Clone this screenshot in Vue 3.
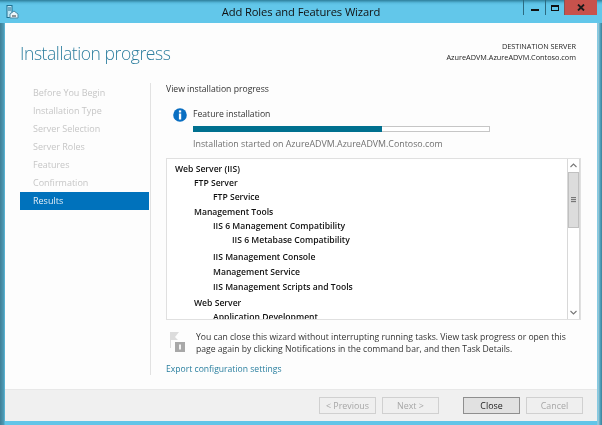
<script setup>
const steps = ['Before You Begin', 'Installation Type', 'Server Selection', 'Server Roles', 'Features', 'Confirmation', 'Results']
const tree = [
  { t: 'Web Server (IIS)', l: 0, h: 14 },
  { t: 'FTP Server', l: 1, h: 13.5 },
  { t: 'FTP Service', l: 2, h: 15 },
  { t: 'Management Tools', l: 1, h: 14.5 },
  { t: 'IIS 6 Management Compatibility', l: 2, h: 13.5 },
  { t: 'IIS 6 Metabase Compatibility', l: 3, h: 17 },
  { t: 'IIS Management Console', l: 2, h: 15 },
  { t: 'Management Service', l: 2, h: 15 },
  { t: 'IIS Management Scripts and Tools', l: 2, h: 16 },
  { t: 'Web Server', l: 1, h: 14 },
  { t: 'Application Development', l: 2, h: 14 },
]
const indent = [8, 27, 46, 65]
</script>

<template>
  <div class="frame">
    <header class="titlebar">
      <svg class="appicon" width="13" height="14" viewBox="0 0 13 14">
        <rect x="1" y="0.5" width="5" height="12" fill="#bfe6f5" stroke="#1f6f8f" stroke-width="1" />
        <path d="M2 3h3M2 5h3" stroke="#1f6f8f" stroke-width="1" />
        <path d="M4 9l4-3 4 3v4H4z" fill="#eef7fb" stroke="#4d8ba5" stroke-width="1" />
        <path d="M6 11h4" stroke="#333" stroke-width="1" />
      </svg>
      <span class="wintitle">Add Roles and Features Wizard</span>
      <div class="controls">
        <span class="ctl ctl-min"><i class="glyph-min"></i></span>
        <span class="ctl ctl-max"><i class="glyph-max"></i></span>
        <span class="ctl ctl-close">
          <svg width="8" height="7" viewBox="0 0 8 7"><path d="M1 .5l6 6M7 .5l-6 6" stroke="#1b1b1b" stroke-width="1.8" /></svg>
        </span>
      </div>
    </header>

    <div class="client">
      <div class="head">
        <h1>Installation progress</h1>
        <div class="dest">
          <div>DESTINATION SERVER</div>
          <div>AzureADVM.AzureADVM.Contoso.com</div>
        </div>
      </div>

      <div class="body">
        <nav class="side">
          <div v-for="s in steps" :key="s" class="step" :class="{ active: s === 'Results' }">{{ s }}</div>
        </nav>

        <main class="main">
          <div class="view">View installation progress</div>
          <div class="status">
            <svg class="info" width="14" height="14" viewBox="0 0 14 14">
              <circle cx="7" cy="7" r="6.8" fill="#0a6fc2" />
              <rect x="5.9" y="2.4" width="2.3" height="2.1" fill="#fff" />
              <rect x="5.9" y="5.5" width="2.3" height="6" fill="#fff" />
            </svg>
            <div class="status-body">
              <div class="feature">Feature installation</div>
              <div class="bar"><div class="fill"></div></div>
              <div class="started">Installation started on AzureADVM.AzureADVM.Contoso.com</div>
            </div>
          </div>

          <div class="listbox">
            <div class="tree">
              <div
                v-for="r in tree"
                :key="r.t"
                class="row"
                :style="{ paddingLeft: indent[r.l] + 'px', height: r.h + 'px' }"
              >{{ r.t }}</div>
            </div>
            <div class="scroll">
              <div class="arrow">
                <svg width="7" height="5" viewBox="0 0 7 5"><path d="M.5 4l3-3 3 3" fill="none" stroke="#777" stroke-width="1.1" /></svg>
              </div>
              <div class="thumb"><i></i></div>
              <div class="track"></div>
              <div class="arrow">
                <svg width="7" height="5" viewBox="0 0 7 5"><path d="M.5 1l3 3 3-3" fill="none" stroke="#777" stroke-width="1.1" /></svg>
              </div>
            </div>
          </div>

          <div class="notice">
            <svg class="flag" width="17" height="21" viewBox="0 0 17 21">
              <path d="M1 0h9L6 5l3 3H2v8H1z" fill="#dcdcdc" />
              <rect x="6" y="10" width="10" height="10" fill="#a8a8a8" />
              <rect x="10" y="12.5" width="2" height="5" fill="#f2f2f2" />
            </svg>
            <p>You can close this wizard without interrupting running tasks. View task progress or open this page again by clicking Notifications in the command bar, and then Task Details.</p>
          </div>
          <a class="export">Export configuration settings</a>
        </main>
      </div>

      <footer class="foot">
        <button class="btn off">&lt; Previous</button>
        <button class="btn off">Next &gt;</button>
        <button class="btn primary">Close</button>
        <button class="btn off">Cancel</button>
      </footer>
    </div>
  </div>
</template>

<style scoped>
.frame {
  width: 602px;
  height: 425px;
  box-sizing: border-box;
  padding: 0 5px 4px 5px;
  display: flex;
  flex-direction: column;
  overflow: hidden;
  background: linear-gradient(90deg, #3f7f96 0, #4f9db8 4px, #62c5e8 5px, #62c5e8 597px, #a9cfdc 598px, #52a6c2 600px, #3c8098 602px);
  font-family: "Open Sans", "Liberation Sans", sans-serif;
  color: #333;
  filter: blur(0.45px);
}
.titlebar {
  height: 23px;
  margin: 0 -5px;
  padding: 3px 5px 0 5px;
  box-sizing: border-box;
  flex: none;
  display: flex;
  align-items: center;
  position: relative;
  background: linear-gradient(180deg, #2e7f9b 0, #58bcdf 3px, #62c7ea 5px, #62c7ea 100%);
}
.appicon { margin: 0 0 2px 1px; }
.wintitle {
  position: absolute;
  left: 0;
  right: 0;
  top: 4px;
  text-align: center;
  font-size: 11.2px;
  letter-spacing: -0.11px;
  line-height: 15px;
  color: #111;
}
.controls {
  position: absolute;
  top: 0;
  right: 5px;
  display: flex;
  height: 15px;
}
.ctl {
  display: flex;
  align-items: center;
  justify-content: center;
  box-sizing: border-box;
  height: 15px;
  border-left: 1px solid #2c6a80;
}
.ctl-min { width: 22px; }
.ctl-max { width: 19px; }
.ctl-close { width: 33px; background: #c7524c; border-left-color: #8c5050; }
.glyph-min { display: block; width: 8px; height: 2px; background: #111; margin-top: 4px; }
.glyph-max { display: block; width: 8px; height: 6px; box-sizing: border-box; border: 1.5px solid #111; border-top-width: 2px; }
.client {
  flex: 1;
  min-height: 0;
  display: flex;
  flex-direction: column;
  background: #fdfdfd;
}
.head {
  height: 60px;
  flex: none;
  display: flex;
  justify-content: space-between;
  padding: 0 21px 0 15px;
  box-sizing: border-box;
}
h1 {
  margin: 17px 0 0;
  font-size: 17.5px;
  letter-spacing: -0.43px;
  line-height: 26px;
  font-weight: 300;
  color: #2f7f9f;
}
.dest {
  margin-top: 18px;
  text-align: right;
  font-size: 7.3px;
  line-height: 10.5px;
  color: #222;
}
.body {
  flex: 1;
  min-height: 0;
  display: flex;
}
.side {
  width: 129px;
  margin-left: 15px;
  padding-top: 1px;
  flex: none;
}
.step {
  height: 18px;
  line-height: 18px;
  padding-left: 13px;
  font-size: 9px;
  color: #c6c6c6;
}
.step.active {
  background: #0072bc;
  color: #e3eef6;
}
.main {
  margin-left: 1px;
  width: 431px;
  height: 292px;
  box-sizing: border-box;
  padding: 0 15px;
  border-left: 1px solid #e2e2e2;
  margin-bottom: 14px;
}
.view {
  font-size: 8.65px;
  line-height: 12px;
  color: #333;
}
.status {
  display: flex;
  margin-top: 13px;
  padding-left: 7px;
}
.info { flex: none; }
.status-body { margin-left: 6px; }
.feature { font-size: 8.65px; line-height: 12px; color: #333; }
.bar {
  width: 297px;
  height: 6px;
  margin-top: 6px;
  box-sizing: border-box;
  border: 1px solid #c6c6c6;
  background: #fff;
}
.fill { width: 64%; height: 6px; margin: -1px 0 0 -1px; background: #00708f; }
.started { margin-top: 6px; font-size: 8.85px; line-height: 12px; color: #707070; }
.listbox {
  margin-top: 8px;
  width: 415px;
  height: 162px;
  box-sizing: border-box;
  border: 1px solid #e0e0e0;
  background: #fff;
  display: flex;
  overflow: hidden;
}
.tree { flex: 1; padding-top: 4px; overflow: hidden; }
.row {
  font-size: 8.6px;
  line-height: 13px;
  font-weight: 600;
  color: #111;
  white-space: nowrap;
}
.scroll {
  width: 13px;
  flex: none;
  box-sizing: border-box;
  border: 1px solid #d8d8d8;
  border-top: 0;
  border-bottom: 0;
  display: flex;
  flex-direction: column;
}
.arrow {
  height: 13px;
  flex: none;
  display: flex;
  align-items: center;
  justify-content: center;
  background: #fff;
}
.thumb {
  height: 56px;
  flex: none;
  box-sizing: border-box;
  background: #dcdcdc;
  border: 1px solid #c0c0c0;
  display: flex;
  align-items: center;
  justify-content: center;
}
.thumb i {
  display: block;
  width: 5px;
  height: 6px;
  background: repeating-linear-gradient(180deg, #777 0, #777 1px, #ccc 1px, #ccc 2px);
}
.track { flex: 1; background: #fff; }
.notice {
  display: flex;
  margin-top: 11px;
  padding-left: 3px;
}
.flag { flex: none; margin-top: 1px; }
.notice p {
  margin: 0 0 0 10px;
  width: 384px;
  font-size: 8.62px;
  line-height: 12.4px;
  color: #333;
}
.export {
  display: block;
  margin-top: 7px;
  font-size: 8.6px;
  line-height: 12px;
  color: #2a7f9f;
}
.foot {
  margin-top: auto;
  height: 32px;
  flex: none;
  box-sizing: border-box;
  padding: 7px 14px 0 0;
  background: #f0f0f0;
  border-top: 1px solid #e8e8e8;
  display: flex;
  justify-content: flex-end;
}
.btn {
  width: 57px;
  height: 17px;
  padding: 0;
  box-sizing: border-box;
  border: 1px solid #d0d0d0;
  background: #efefef;
  font-family: inherit;
  font-size: 8.9px;
  line-height: 15px;
  color: #a6a6a6;
  margin-left: 6px;
}
.btn.primary {
  margin-left: 24px;
  background: #e1e1e1;
  border-color: #8f8f8f;
  color: #222;
}
</style>
